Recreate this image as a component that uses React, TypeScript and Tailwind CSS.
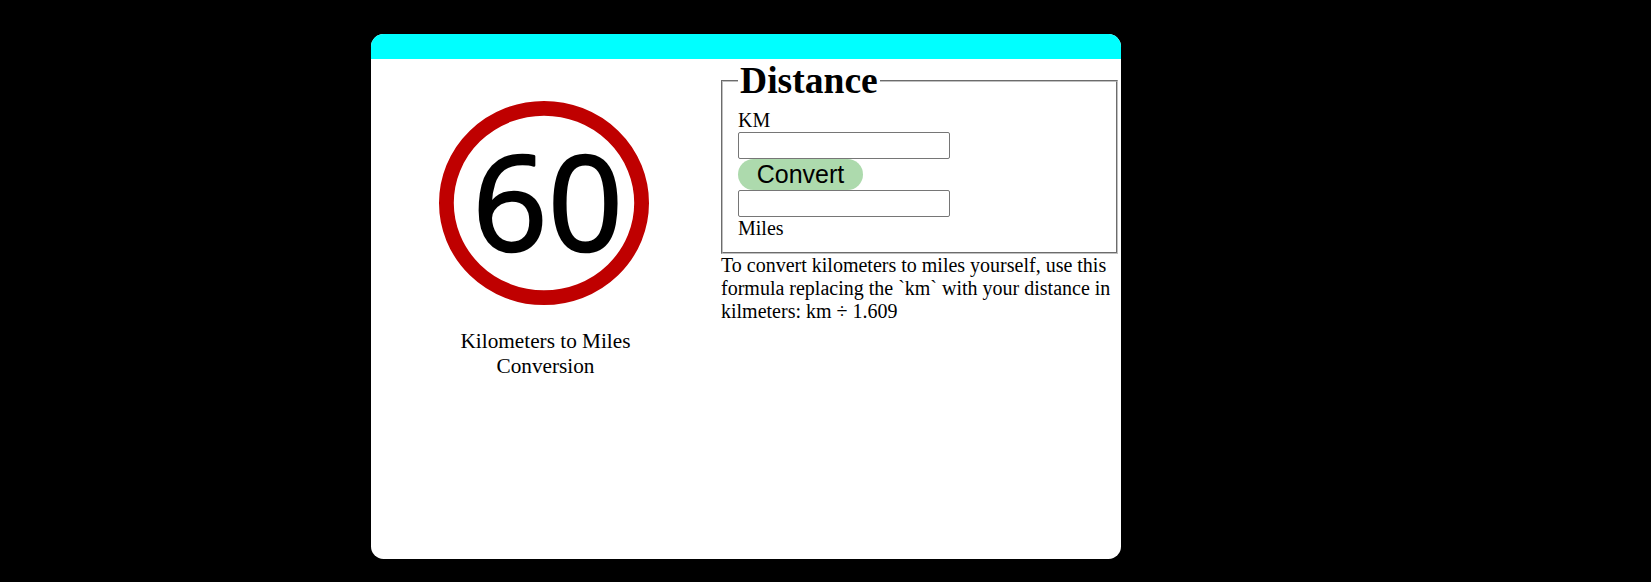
function SpeedSign() {
  return (
    <svg className="mr-1 block h-[206px] w-[212px]" viewBox="0 0 212 206" role="img" aria-label="60">
      <ellipse cx="106" cy="103" rx="97.6" ry="94.7" fill="#fff" stroke="#bf0000" strokeWidth="14.8" />
      <text
        x="34.4 109.9"
        y="150.8"
        fontFamily="'Open Sans', sans-serif"
        fontSize="131"
        stroke="#000"
        strokeWidth="2.6"
        strokeLinejoin="round"
      >
        60
      </text>
    </svg>
  );
}

const fieldClass =
  "block h-[27px] w-[212px] rounded-[2px] border border-[#767676] bg-white px-0.5 outline-none";

export default function App() {
  return (
    <div className="flex h-[582px] bg-black pt-[34px] pl-[371px] font-['Liberation_Serif',serif] text-black">
      <main className="flex h-[525px] w-[750px] flex-col overflow-hidden rounded-[12.5px] bg-white">
        <header className="h-[25px] shrink-0 bg-[#00ffff]" />
        <div className="flex">
          <section className="flex w-[350px] flex-col items-center pt-[41px]">
            <SpeedSign />
            <p className="mt-[23px] mr-px w-[200px] text-center text-[21.25px] leading-[25px]">
              Kilometers to Miles Conversion
            </p>
          </section>
          <section className="w-[397px] pt-px text-[20px] leading-[23px]">
            <fieldset className="border-2 border-[#c0c0c0] px-[15px] pt-[7px] pb-[12px] [border-style:groove]">
              <legend className="px-0.5 text-[37.6px] leading-[42px] font-bold">Distance</legend>
              <label className="block" htmlFor="km">KM</label>
              <input id="km" className={fieldClass} />
              <button
                type="button"
                className="block h-[31px] w-[125px] rounded-full bg-[#addaad] text-center font-['Liberation_Sans',sans-serif] text-[25px] leading-[31px]"
              >
                Convert
              </button>
              <input id="miles" className={fieldClass} />
              <label className="block" htmlFor="miles">Miles</label>
            </fieldset>
            <p>
              To convert kilometers to miles yourself, use this formula replacing the `km` with your
              distance in kilmeters: km ÷ 1.609
            </p>
          </section>
        </div>
      </main>
    </div>
  );
}
